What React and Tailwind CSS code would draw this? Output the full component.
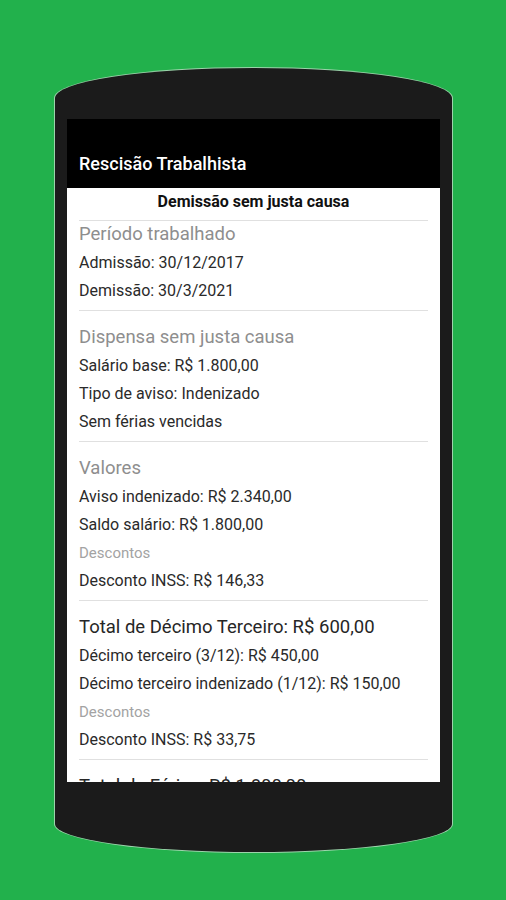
const sections = [
  {
    title: "Período trabalhado",
    first: true,
    rows: [{ t: "Admissão: 30/12/2017" }, { t: "Demissão: 30/3/2021" }],
  },
  {
    title: "Dispensa sem justa causa",
    rows: [
      { t: "Salário base: R$ 1.800,00" },
      { t: "Tipo de aviso: Indenizado" },
      { t: "Sem férias vencidas" },
    ],
  },
  {
    title: "Valores",
    rows: [
      { t: "Aviso indenizado: R$ 2.340,00" },
      { t: "Saldo salário: R$ 1.800,00" },
      { t: "Descontos", sub: true },
      { t: "Desconto INSS: R$ 146,33" },
    ],
  },
  {
    title: "Total de Décimo Terceiro: R$ 600,00",
    dark: true,
    rows: [
      { t: "Décimo terceiro (3/12): R$ 450,00" },
      { t: "Décimo terceiro indenizado (1/12): R$ 150,00" },
      { t: "Descontos", sub: true },
      { t: "Desconto INSS: R$ 33,75" },
    ],
  },
  {
    title: "Total de Férias: R$ 1.800,00",
    dark: true,
    last: true,
    rows: [],
  },
]

function Section({ s }) {
  return (
    <div className={`${s.first ? "" : "pt-[13px]"} ${s.last ? "" : "pb-[5px] border-b border-[#e0e0e0]"}`}>
      <div
        className={`h-[28px] flex items-center text-[18.5px] whitespace-nowrap ${s.dark ? "text-[#262626]" : "text-[#8e8e8e]"}`}
      >
        {s.title}
      </div>
      {s.rows.map((r, i) => (
        <div
          key={i}
          className={`h-[28px] flex items-center whitespace-nowrap ${r.sub ? "text-[15px] text-[#a3a3a3]" : "text-[16px] text-[#2a2a2a]"}`}
        >
          {r.t}
        </div>
      ))}
    </div>
  )
}

export default function App() {
  return (
    <div className="w-[506px] h-[900px] bg-[#22b14c] pt-[68px] pl-[55px] overflow-hidden font-[Roboto,sans-serif]">
      {/* phone body */}
      <div className="w-[397px] h-[784px] bg-[#1b1b1b] ring-1 ring-[#cfe3d3]/70 rounded-t-[50%_30px] rounded-b-[50%_28px] pt-[51px] px-[12px]">
        {/* screen */}
        <div className="w-[373px] h-[663px] bg-white overflow-hidden flex flex-col">
          <div className="h-[69px] shrink-0 bg-black flex items-end pb-[14px] px-[12px]">
            <span className="text-white text-[18px] font-medium leading-[20px]">Rescisão Trabalhista</span>
          </div>
          <div className="px-[12px]">
            <div className="h-[28px] flex items-center justify-center text-[16px] font-bold text-[#111]">
              Demissão sem justa causa
            </div>
            <div className="h-[5px] border-b border-[#e0e0e0]" />
            {sections.map((s, i) => (
              <Section key={i} s={s} />
            ))}
          </div>
        </div>
      </div>
    </div>
  )
}
